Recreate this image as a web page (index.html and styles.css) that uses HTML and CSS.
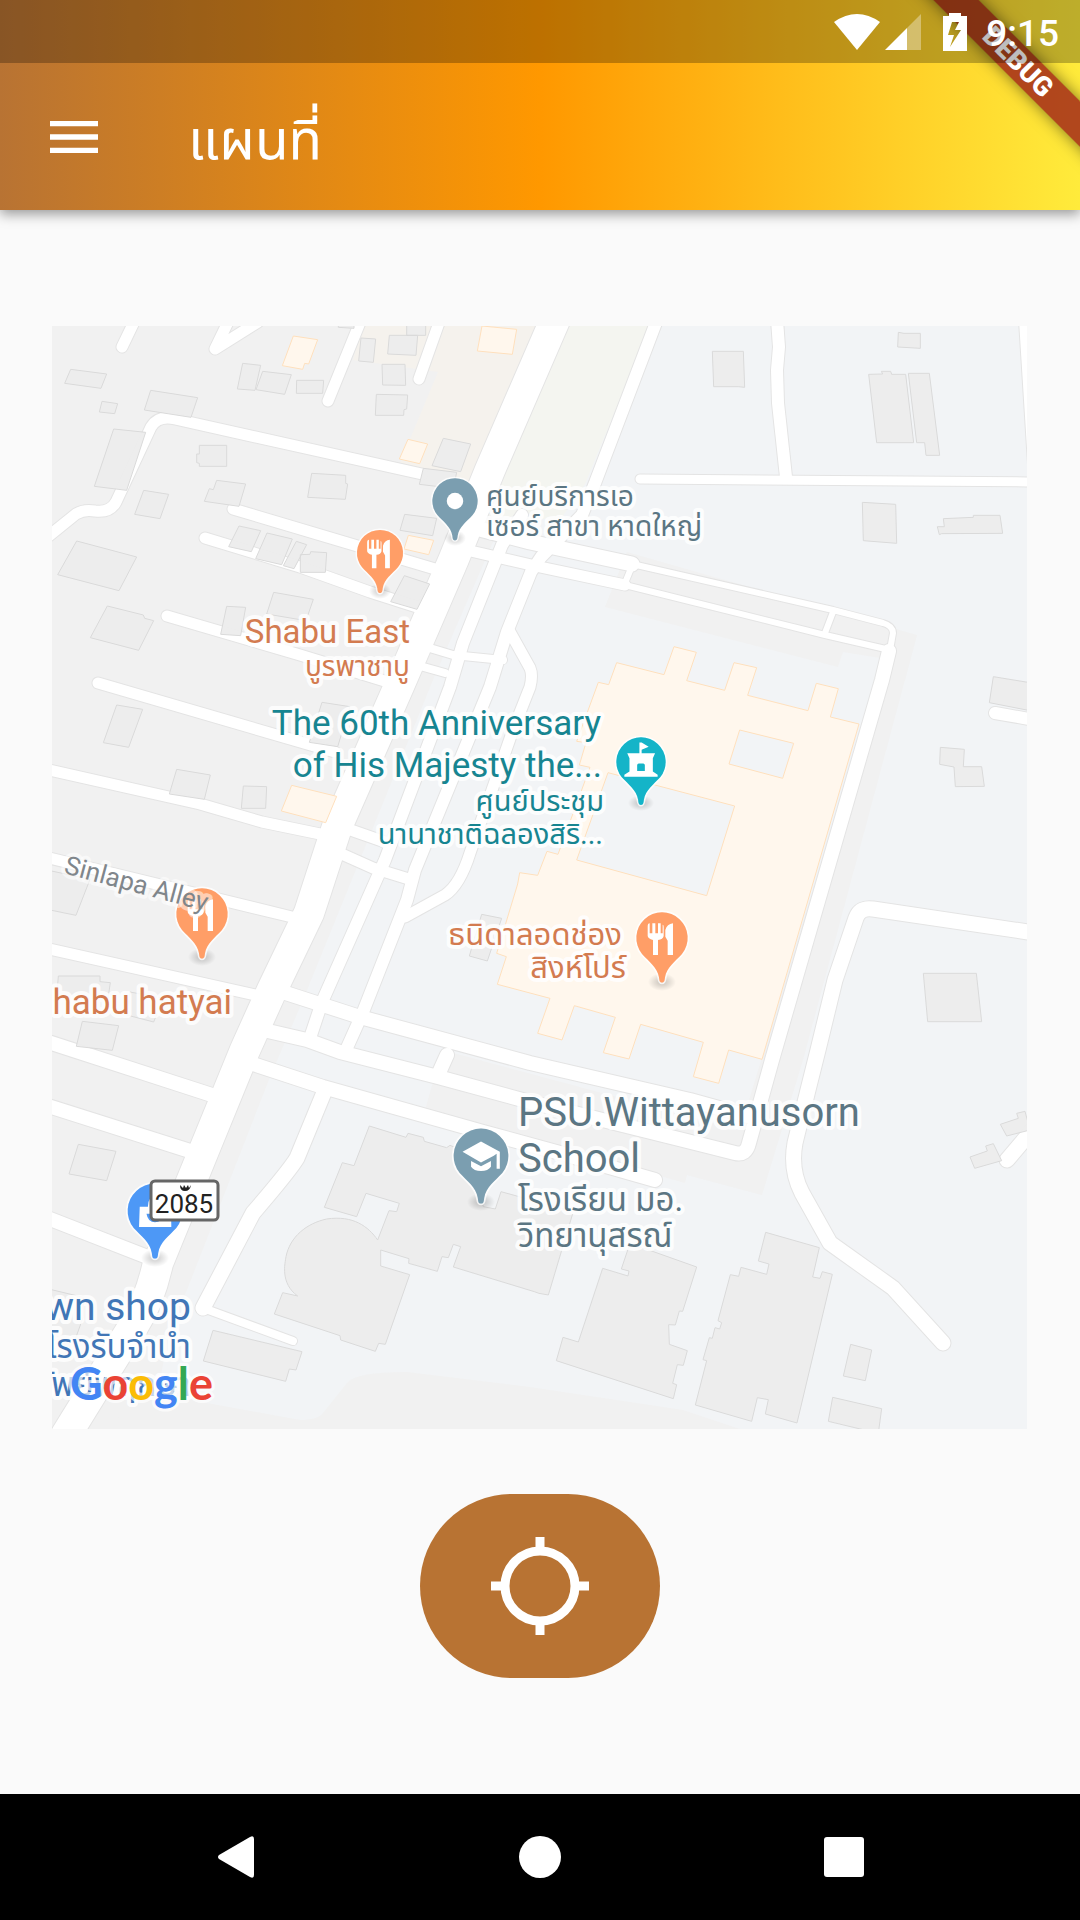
FILE: index.html
```html
<!DOCTYPE html>
<html lang="th">
<head>
<meta charset="utf-8">
<meta name="viewport" content="width=device-width, initial-scale=1">
<title>แผนที่</title>
<link rel="stylesheet" href="styles.css">
</head>
<body>
<header class="app-bar">
  <div class="debug-frame"><div class="debug-banner">DEBUG</div></div>
  <div class="status-bar">
    <svg class="icon-wifi" viewBox="0 0 46 36" aria-hidden="true"><path d="M0 8Q23-8 46 8L23 36Z"/></svg>
    <svg class="icon-signal" viewBox="0 0 36 36" aria-hidden="true"><path opacity=".35" d="M36 0V36H22V14Z"/><path d="M0 36 22 14V36Z"/></svg>
    <svg class="icon-battery" viewBox="0 0 24 38" aria-hidden="true"><path fill-rule="evenodd" d="M6 0H18V3H24V38H0V3H6ZM9 9 5 22H11L7 34 18 17H12L16 9Z"/></svg>
    <time class="clock">9:15</time>
  </div>
  <div class="toolbar">
    <button class="menu-button" type="button" aria-label="เมนู">
      <svg viewBox="0 0 24 24" aria-hidden="true"><path d="M3 18h18v-2H3v2zm0-5h18v-2H3v2zm0-7v2h18V6H3z"/></svg>
    </button>
    <h1 class="title">แผนที่</h1>
  </div>
</header>

<main class="content">
  <svg class="map" viewBox="52 326 975 1103" role="img" aria-label="Google Maps">
    <defs>
      <g id="roads">
        <path class="w29" d="M555 320 490 470 453 561 399 686 337 827 309 913 272 990 245 1050 207 1143 158 1263Q150 1300 134 1325L66 1435"/>
        <path class="w12" d="M657 320 595 483 582 515 541 557 531 572 507 632 490 687 415 870 407 900 363 1012 346 1050"/>
        <path class="w12" d="M522 515 502 545 463 643 450 687 385 860 322 1002 311 1035"/>
        <path class="w10" d="M510 632 530 668Q533 675 530 687L513 730 470 853Q460 885 445 895L405 917"/>
        <path class="w10" d="M135 320 122 347M229 320 215 349 258 322M361 320 328 401M440 320 419 379"/>
        <path class="w10" d="M45 539 76 514Q84 509 95 511 110 513 116 502L151 427Q158 415 175 419L422 474"/>
        <path class="w10" d="M233 509 435 569M205 538 300 567 370 592 420 608M167 616 300 655 388 682M98 683 335 752"/>
        <path class="w10" d="M45 769 200 804 262 822 325 835M45 857 292 917M45 948 260 996"/>
        <path class="w13" d="M45 1041 215 1096M45 1105 190 1151M45 1217 145 1256"/>
        <path class="w14" d="M460 524 530 542 632 564"/>
        <path class="w10" d="M462 549 540 567 625 585"/>
        <path class="w6" d="M632 564 833 610 883 623Q893 626 893 633L890 650M625 585 825 635 890 650M632 566 625 583M833 612 825 633"/>
        <path class="w13" d="M889 651 882 680 772 1060 749 1143Q746 1156 735 1153L683 1140 530 1102 438 1077 340 1052 307 1040 255 1028"/>
        <path class="w13" d="M270 988 360 1017 530 1063 690 1100 755 1118M447 1055 438 1075"/>
        <path class="w13" d="M250 1063 323 1087 483 1132 560 1153 655 1180"/>
        <path class="w14" d="M325 1090 297 1158Q290 1170 253 1213L203 1308"/>
        <path class="w8" d="M203 1308 293 1341M423 646 453 655 503 660M420 666 445 673"/>
        <path class="w10" d="M345 828 385 842M335 851 373 868 412 880"/>
        <path class="w9" d="M640 479 1035 482"/>
        <path class="w12" d="M777 320 779 347 777 370 778 403 786 477M1025 320 1035 480M995 713 1035 720"/>
        <path class="w14" d="M1035 933 873 909Q860 907 856 918L835 980 818 1050 808 1090 795 1143Q790 1170 802 1193L830 1243 893 1288 943 1343M1007 1160 1035 1127"/>
      </g>
      <g id="pin">
        <path class="pin-halo" d="M0 134C-8 134-8 126-9 118-14 88-40 70-60 48A77 77 0 1 1 60 48C40 70 14 88 9 118 8 126 8 134 0 134Z"/>
        <path d="M0 134C-8 134-8 126-9 118-14 88-40 70-60 48A77 77 0 1 1 60 48C40 70 14 88 9 118 8 126 8 134 0 134Z"/>
      </g>
      <path id="cutlery" d="M-43-34Q-43-44-37-44V-14H-29V-44H-20V-14H-12V-44H-4V-14H2V-40Q5-40 5-34V-6Q3 4-12 6V51H-27V6Q-42 2-43-6ZM33-44V51H17V8L10-4V-24Q15-42 33-44Z"/>
      <radialGradient id="shade"><stop offset="0" stop-opacity=".22"/><stop offset="1" stop-opacity="0"/></radialGradient>
    </defs>

    <rect class="ground" x="52" y="326" width="975" height="1103"/>
    <path class="block" d="M52 326H590L520 480 433 680 303 1000 270 1077 187 1290 170 1330 150 1429H52Z"/>
    <path class="commercial" d="M362 326H560L470 483 400 463 438 372 353 360Z"/>
    <path class="green" d="M555 326H650L585 484 560 520 475 515Z"/>
    <path class="block" d="M627 552 917 635 905 680 803 1060 762 1195 687 1175 685 1183 425 1110 442 1050 740 1130 870 700 880 658 843 652 838 667 605 607 613 587Z"/>
    <path class="block" d="M100 1429 160 1390 207 1403 300 1420Q318 1420 323 1413L347 1383Q355 1372 407 1372L530 1387 683 1410 740 1429Z"/>

    <use href="#roads" class="casing"/>
    <use href="#roads" class="surface"/>

    <g class="building" transform="translate(40 310) scale(.33333)">
      <path d="M92 178 200 192 183 235 74 220ZM186 274 233 281 224 311 178 306ZM332 241 473 263 453 322 313 300ZM221 357 317 367 260 541 163 529ZM478 406H560V469H478V460L470 458V432H478ZM311 541 386 553 360 626 284 613ZM530 511 617 522 597 589 493 574 508 536 520 539ZM815 490 917 496V520L923 522 916 568 803 562ZM110 693 290 741 237 842 53 794ZM597 648 662 662 634 725 566 710ZM681 669 757 687 725 764 647 746ZM769 694 800 704 762 776 730 767ZM812 725 860 728 856 787H781V734L810 733ZM701 847 820 868 798 932 680 912ZM560 889 617 892 602 977 542 973ZM202 888 310 915 314 925 341 932 296 1021 151 983ZM1093 797 1169 822 1131 898 1052 875ZM1094 613 1190 625 1178 677 1080 661ZM1210 385 1292 402 1262 485 1176 467ZM1150 475 1250 487 1240 535 1138 523ZM1009 253 1103 255 1100 297 1092 299 1091 316 1006 316ZM1026 163H1095L1097 226 1028 225ZM1048 76H1133L1128 136 1043 132ZM1100 40H1157V76H1100ZM963 84 1007 87 1000 157 956 153ZM895 40H942V55L895 52ZM770 211H851L848 250H769ZM668 184 754 194 734 253 648 239ZM608 160 662 166 645 241 592 237Z"/>
      <path class="shop" d="M760 78 833 89 806 162 794 160 788 178 727 167ZM1104 388 1163 402 1139 461 1078 447ZM1105 676 1181 691 1166 734 1092 717ZM1326 48 1430 58 1417 133 1312 123Z"/>
    </g>
    <g class="building" transform="translate(530 310) scale(.33333)">
      <path d="M547 124H640L644 232 625 230H551ZM1105 67 1122 70H1171V115L1103 111ZM1016 193 1058 192 1054 184H1082L1085 193H1127L1151 398H1040ZM1135 190H1198L1229 436H1188L1184 398H1160ZM997 577 1097 583 1100 700 1000 692ZM1240 626 1330 622V616H1410L1418 670 1235 671 1228 674 1222 650H1243ZM1390 1100 1500 1118V1202L1378 1178Z"/>
    </g>
    <g class="building" transform="translate(40 680) scale(.33333)">
      <path d="M230 75 308 88 266 202 190 188ZM410 268 511 285 493 358 388 342ZM610 318 680 320 677 385 604 385ZM846 67 930 80 893 200 808 187ZM30 572 150 598 108 706 30 690ZM55 888H180V905L211 908 204 955H50ZM270 936 370 955 341 1026 260 1005ZM127 1024 236 1037 217 1111 109 1099ZM1325 703 1385 715 1342 843 1288 828Z"/>
      <path class="shop" d="M755 316 890 349 857 428 724 393Z"/>
    </g>
    <g class="building" transform="translate(530 680) scale(.33333)">
      <path d="M1231 202 1303 208 1300 260H1355L1363 319 1276 320 1272 261 1229 253ZM1180 880H1339L1355 1025H1193Z"/>
      <path class="shop" fill-rule="evenodd" d="M205 7 236 14 260-52 402-16 432-100 499-83 470 2 584 31 612-52 680-37 653 46 834 92 859 10 925 26 901 111 987 132 696 1138 596 1110 566 1210 490 1190 520 1087 332 1033 297 1137 220 1118 256 1012 133 977 96 1080 23 1060 60 955-98 913-71 830-100 820-37 612-31 578 23 586 51 514 84 523 180 262 148 255 168 188 140 184ZM629 150 791 190 758 295 597 252ZM234 278 614 378 530 647 140 540Z"/>
    </g>
    <g class="building" transform="translate(40 1050) scale(.33333)">
      <path d="M115 283 228 304 200 392 87 372ZM30 718 130 742 130 800 105 870 30 870ZM988 228 1098 262 1104 250 1150 262 1153 274 1220 293 1230 286 1290 310 1330 470 1366 477 1383 425 1600 485 1572 578 1525 735 1497 730 1483 725 1240 651 1262 590 1240 583 1225 623 1206 620 1192 664 1106 640 1107 626 1022 600V648L1109 674 1036 883 1016 880 1006 904 902 870 900 857 703 792 728 728 773 738C720 700 735 640 738 620 750 560 800 520 860 507 940 495 985 530 1013 570L1047 482 1070 485 1078 460 978 430 950 500 853 472 907 338 942 347ZM519 841 786 905 768 960 748 957 737 994 490 933Z"/>
    </g>
    <g class="building" transform="translate(530 1050) scale(.33333)">
      <path d="M218 655 294 678 297 663 274 657 300 580 500 651 458 784 448 783 436 825 416 824 418 883 472 902 460 946 442 944 428 1000 440 1004 430 1046 79 932 99 862 145 876ZM707 547 868 593 848 681 870 685 877 665 907 673 801 1119 706 1092 715 1049 682 1043 665 1114 496 1065 530 932 519 929 538 863 547 865 555 833 569 837 575 818 564 812 601 674 626 679 633 652 710 673 717 642 685 633ZM962 883 1025 900 1006 992 940 978ZM908 1042 1055 1076 1045 1150 895 1114ZM1411 223 1465 205 1460 190 1485 184 1500 240 1430 258ZM1320 321 1372 303 1367 288 1390 281 1415 332 1334 355Z"/>
    </g>

    <g class="shadows" fill="url(#shade)">
      <ellipse cx="455" cy="538" rx="11" ry="8"/><ellipse cx="380" cy="591" rx="11" ry="8"/><ellipse cx="202" cy="957" rx="14" ry="9"/><ellipse cx="641" cy="803" rx="13" ry="8"/><ellipse cx="662" cy="982" rx="14" ry="9"/><ellipse cx="481" cy="1202" rx="14" ry="9"/><ellipse cx="155" cy="1258" rx="14" ry="9"/>
    </g>
    <g transform="translate(455 501) scale(.294)"><use href="#pin" class="slate"/><circle r="28" fill="#fff"/></g>
    <g transform="translate(380 553) scale(.299)"><use href="#pin" class="orange"/><use href="#cutlery" fill="#fff"/></g>
    <g transform="translate(202 914) scale(.333)"><use href="#pin" class="orange"/><use href="#cutlery" fill="#fff"/></g>
    <g transform="translate(641 762) scale(.32)"><use href="#pin" class="teal"/><path fill="#fff" fill-rule="evenodd" d="M-5-61H2L24-48 2-38V-27H44L37-12V30L52 40V46H-52V40L-36 30V-12L-43-27H-5ZM-12 28H12V10Q12 5 7 5H-7Q-12 5-12 10Z"/></g>
    <g transform="translate(662 938) scale(.333)"><use href="#pin" class="orange"/><use href="#cutlery" fill="#fff"/></g>
    <g transform="translate(481 1156) scale(.355)"><use href="#pin" class="slate"/><path fill="#fff" d="M-52-12 0-41 53-12V36H44V-6L36-1 0 18ZM-28 14 0 29 28 14V30Q20 42 0 42T-28 30Z"/></g>
    <g transform="translate(155 1211) scale(.355)"><use href="#pin" class="blue"/><path fill="#fff" fill-rule="evenodd" d="M-43-12H-20Q-20-40 0-40T20-12H45L46 45H-45ZM-24 8Q-20 32 0 32T24 8H14Q12 22 0 22T-14 8Z"/></g>

    <g class="label slate-text">
      <text class="thai-s" x="486" y="506">ศูนย์บริการเอ</text>
      <text class="thai-s" x="486" y="536">เซอร์ สาขา หาดใหญ่</text>
      <text class="t-xl" x="518" y="1126">PSU.Wittayanusorn</text>
      <text class="t-xl" x="518" y="1172">School</text>
      <text class="thai-l" x="518" y="1211">โรงเรียน มอ.</text>
      <text class="thai-l" x="518" y="1247">วิทยานุสรณ์</text>
    </g>
    <g class="label orange-text end">
      <text class="t-s" x="410" y="643">Shabu East</text>
      <text class="thai-s" x="410" y="676">บูรพาชาบู</text>
      <text class="t-m" x="232" y="1014">Shabu hatyai</text>
      <text class="thai-m" x="622" y="945">ธนิดาลอดช่อง</text>
      <text class="thai-m" x="626" y="978">สิงห์โปร์</text>
    </g>
    <g class="label teal-text end">
      <text class="t-m" x="601" y="735">The 60th Anniversary</text>
      <text class="t-m" x="602" y="777">of His Majesty the...</text>
      <text class="thai-t" x="604" y="811">ศูนย์ประชุม</text>
      <text class="thai-t" x="603" y="844">นานาชาติฉลองสิริ...</text>
    </g>
    <g class="label blue-text end">
      <text class="t-l" x="191" y="1320">Pawn shop</text>
      <text class="thai-l" x="191" y="1358">โรงรับจำนำ</text>
      <text class="thai-l" x="191" y="1396">ทรัพย์พฤกษา</text>
    </g>
    <text class="label street" transform="translate(63 873) rotate(15)">Sinlapa Alley</text>

    <rect class="shield" x="151" y="1181" width="67" height="39" rx="4"/>
    <path fill="#222" d="M180 1185 183 1188 184 1185 186 1188 188 1185 189 1188 191 1185Q190 1191 185 1191T180 1185Z"/>
    <text class="shield-text" x="184" y="1213">2085</text>

    <text class="google" x="70" y="1400"><tspan class="g-blue">G</tspan><tspan class="g-red">o</tspan><tspan class="g-yellow">o</tspan><tspan class="g-blue">g</tspan><tspan class="g-green">l</tspan><tspan class="g-red">e</tspan></text>
  </svg>

  <button class="locate-button" type="button" aria-label="ตำแหน่งของฉัน">
    <svg viewBox="0 0 98 98" aria-hidden="true"><circle cx="49" cy="49" r="35"/><path d="M49 0V12M49 86V98M0 49H12M86 49H98"/></svg>
  </button>
</main>

<nav class="nav-bar" aria-label="System">
  <button type="button" aria-label="Back"><svg viewBox="0 0 42 42" aria-hidden="true"><path d="M39 3V39Q39 43 35 41L4 23Q2 21 4 19L35 1Q39-1 39 3Z"/></svg></button>
  <button type="button" aria-label="Home"><svg viewBox="0 0 42 42" aria-hidden="true"><circle cx="21" cy="21" r="21"/></svg></button>
  <button type="button" aria-label="Recents"><svg viewBox="0 0 42 42" aria-hidden="true"><rect x="1" y="1" width="40" height="40" rx="3"/></svg></button>
</nav>
</body>
</html>
```
FILE: styles.css
```css
* { box-sizing: border-box; }

body {
  margin: 0;
  min-height: 100vh;
  display: flex;
  flex-direction: column;
  background: #fafafa;
  font-family: Roboto, "Noto Sans Thai", "Noto Sans", sans-serif;
}

button { border: 0; padding: 0; cursor: pointer; }
svg { display: block; }

/* App bar */
.app-bar {
  position: relative;
  color: #fff;
  background: linear-gradient(90deg, #b87333, #ff9800 50%, #ffeb3b);
  box-shadow: 0 4px 12px rgba(0, 0, 0, .4);
}

.status-bar {
  position: relative;
  display: flex;
  align-items: center;
  justify-content: flex-end;
  height: 63px;
  padding-right: 21px;
  background: rgba(0, 0, 0, .26);
  fill: #fff;
}

.icon-wifi { width: 46px; height: 36px; margin-right: 5px; }
.icon-signal { width: 36px; height: 36px; margin-right: 22px; }
.icon-battery { width: 24px; height: 38px; margin-right: 19px; }
.clock { font-size: 37px; font-weight: 500; line-height: 63px; padding-top: 3px; }

.toolbar {
  display: flex;
  align-items: center;
  height: 147px;
  padding: 0 42px;
}

.menu-button { width: 64px; height: 64px; background: none; fill: #fff; }
.title { margin: 0 0 0 82px; padding-top: 6px; font-size: 55px; font-weight: 400; line-height: 64px; }

.debug-frame {
  position: absolute;
  inset: 0;
  overflow: hidden;
  pointer-events: none;
}
.debug-banner {
  position: absolute;
  top: 46px;
  right: -98px;
  width: 320px;
  height: 32px;
  transform: rotate(45deg);
  background: rgba(152, 20, 20, .76);
  box-shadow: 0 0 16px rgba(0, 0, 0, .5);
  font-size: 27px;
  font-weight: 900;
  line-height: 32px;
  text-align: center;
}

/* Map */
.content {
  flex: 1;
  display: flex;
  flex-direction: column;
  align-items: center;
  gap: 65px;
  padding: 116px 53px 116px 52px;
}

.map { width: 100%; height: auto; }

.ground { fill: #f2f4f6; }
.block { fill: #f1f1f1; }
.commercial { fill: #f5f2ed; }
.green { fill: #f4f5f0; }

.casing { --edge: 2px; stroke: #e4e4e4; }
.surface { --edge: 0px; stroke: #fff; }
#roads path {
  fill: none;
  stroke-width: calc(var(--road) + var(--edge));
  stroke-linecap: round;
  stroke-linejoin: round;
}
.w6 { --road: 6px; }
.w8 { --road: 8px; }
.w9 { --road: 9px; }
.w10 { --road: 11px; }
.w12 { --road: 12px; }
.w13 { --road: 14px; }
.w14 { --road: 15px; }
.w29 { --road: 30px; }

.building { fill: #ececec; fill-opacity: .96; stroke: #dadada; stroke-width: 3px; }
.building .shop { fill: #fff7ed; fill-opacity: 1; stroke: #ffe0bd; }

.pin-halo { stroke: #fff; stroke-opacity: .8; stroke-width: 10px; }
.slate { fill: #7b9eb0; }
.orange { fill: #ff9e67; }
.teal { fill: #14b4c8; }
.blue { fill: #4d98f6; }

.label {
  stroke: rgba(255, 255, 255, .85);
  stroke-width: 8px;
  stroke-linejoin: round;
  paint-order: stroke;
}
.slate-text { fill: #5b7683; }
.orange-text { fill: #d37b50; }
.teal-text { fill: #178591; }
.blue-text { fill: #4176b6; }
.end { text-anchor: end; }
.t-s { font-size: 33px; }
.t-m { font-size: 35px; }
.t-l { font-size: 39px; }
.t-xl { font-size: 40px; }
.thai-s { font-size: 28px; }
.thai-t { font-size: 29px; }
.thai-m { font-size: 31px; }
.thai-l { font-size: 33px; }
.street { font-size: 26px; fill: #80868b; stroke: rgba(255, 255, 255, .5); }

.shield { fill: #fff; stroke: #666; stroke-width: 3px; }
.shield-text { font-size: 26px; fill: #222; text-anchor: middle; }

.google {
  font-family: Lato, sans-serif;
  font-size: 45px;
  font-weight: 700;
  stroke: rgba(255, 255, 255, .7);
  stroke-width: 6px;
  stroke-linejoin: round;
  paint-order: stroke;
}
.g-blue { fill: #4285f4; }
.g-red { fill: #ea4335; }
.g-yellow { fill: #fbbc05; }
.g-green { fill: #34a853; }

/* Locate button */
.locate-button {
  display: grid;
  place-items: center;
  width: 240px;
  height: 184px;
  border-radius: 92px;
  background: #b87333;
}
.locate-button svg { width: 98px; height: 98px; fill: none; stroke: #fff; stroke-width: 9px; }

/* System navigation */
.nav-bar {
  display: flex;
  justify-content: center;
  height: 126px;
  background: #000;
}
.nav-bar button {
  display: grid;
  place-items: center;
  width: 304px;
  background: none;
  fill: #fff;
}
.nav-bar svg { width: 42px; height: 42px; }
```
